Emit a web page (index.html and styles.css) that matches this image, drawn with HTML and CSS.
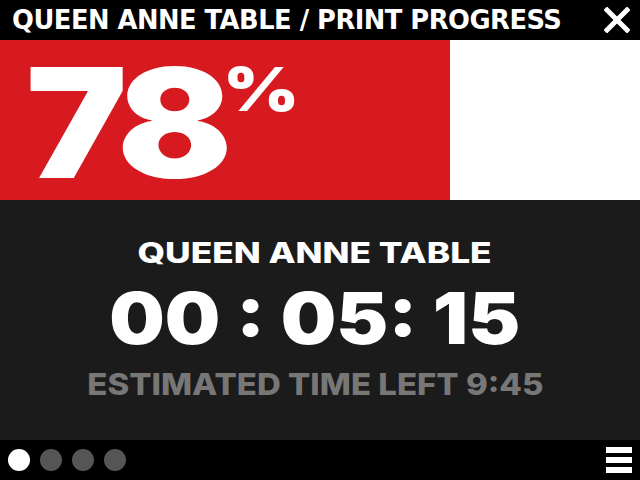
FILE: index.html
```html
<!DOCTYPE html>
<html>
<head>
<meta charset="utf-8">
<link rel="stylesheet" href="styles.css">
</head>
<body>
<div class="screen">
  <header class="topbar">
    <h1 class="title">QUEEN ANNE TABLE / PRINT PROGRESS</h1>
    <svg class="close" width="26" height="26" viewBox="0 0 26 26"><path d="M3 3 L23 23 M23 3 L3 23" stroke="#fff" stroke-width="5" stroke-linecap="square"/></svg>
  </header>
  <section class="progress">
    <div class="fill" style="width:450px">
      <span class="pct">78</span><span class="pct-sign">%</span>
    </div>
  </section>
  <main class="info">
    <div class="name">QUEEN ANNE TABLE</div>
    <div class="timer">00 : 05: 15</div>
    <div class="eta">ESTIMATED TIME LEFT 9:45</div>
  </main>
  <footer class="bottombar">
    <div class="dots">
      <span class="dot active"></span>
      <span class="dot"></span>
      <span class="dot"></span>
      <span class="dot"></span>
    </div>
    <div class="menu"><span></span><span></span><span></span></div>
  </footer>
</div>
</body>
</html>
```
FILE: styles.css
```css
* { box-sizing: border-box; margin: 0; padding: 0; }
html, body { width: 640px; height: 480px; overflow: hidden; background: #000; }
.screen { width: 640px; height: 480px; display: flex; flex-direction: column; }
.topbar { height: 40px; background: #000; display: flex; align-items: center; justify-content: space-between; padding: 0 10px 0 12px; }
.title { font-family: "DejaVu Sans", sans-serif; font-weight: bold; font-size: 26px; color: #fff; letter-spacing: -0.5px; transform: scaleX(0.99); transform-origin: left center; white-space: nowrap; }
.close { display: block; }
.progress { height: 160px; background: #fff; display: flex; }
.fill { background: #d71920; height: 100%; display: flex; align-items: flex-start; padding: 7px 0 0 26px; }
.pct { display: inline-block; font-family: "Inter", sans-serif; font-weight: 900; font-size: 152px; line-height: 1; color: #fff; letter-spacing: -7px; transform: scaleX(1.12); transform-origin: left top; }
.pct-sign { display: inline-block; font-family: "Inter", sans-serif; font-weight: 900; font-size: 60px; line-height: 1; color: #fff; margin-left: 20px; margin-top: 12px; transform: scaleX(1.22); transform-origin: left top; }
.info { flex: 1; background: #1b1b1b; display: flex; flex-direction: column; align-items: center; padding: 39px 10px 0 0; }
.name { font-family: "Inter", sans-serif; font-weight: 800; font-size: 28px; color: #fff; line-height: 1; transform: scaleX(1.26); }
.timer { font-family: "Inter", sans-serif; font-weight: 900; font-size: 71px; color: #fff; line-height: 1; margin-top: 16px; transform: scaleX(1.1); }
.eta { font-family: "Inter", sans-serif; font-weight: 800; font-size: 30px; color: #777; line-height: 1; margin-top: 15px; transform: scaleX(1.1); }
.bottombar { height: 40px; background: #000; display: flex; align-items: center; justify-content: space-between; padding: 0 8px 0 8px; }
.dots { display: flex; gap: 10px; }
.dot { width: 22px; height: 22px; border-radius: 50%; background: #555; display: block; }
.dot.active { background: #fff; }
.menu { display: flex; flex-direction: column; gap: 4px; }
.menu span { display: block; width: 26px; height: 6px; background: #fff; }
```
